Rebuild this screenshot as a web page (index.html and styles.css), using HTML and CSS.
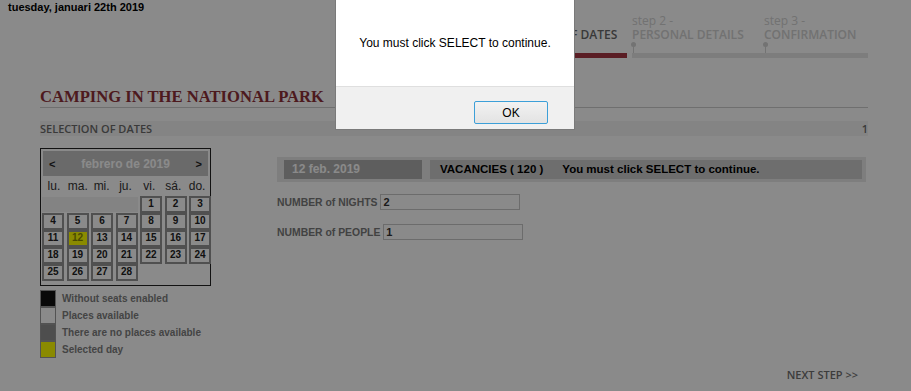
FILE: index.html
```html
<!DOCTYPE html>
<html lang="en">
<head>
  <meta charset="UTF-8">
  <meta name="viewport" content="width=device-width, initial-scale=1.0">
  <title>Camping in the National Park</title>
  <link rel="stylesheet" href="styles.css">
</head>
<body>
  <div class="today">tuesday, januari 22th 2019</div>

  <div class="page">
    <div class="steps">
      <div class="step active">
        <span class="step-num">step 1 -</span>
        <span class="step-name">SELECTION OF DATES</span>
        <div class="step-bar"></div>
      </div>
      <div class="step">
        <span class="step-num">step 2 -</span>
        <span class="step-name">PERSONAL DETAILS</span>
        <div class="step-bar"><i class="pin"></i></div>
      </div>
      <div class="step last">
        <span class="step-num">step 3 -</span>
        <span class="step-name">CONFIRMATION</span>
        <div class="step-bar"><i class="pin"></i></div>
      </div>
    </div>

    <h1 class="title">CAMPING IN THE NATIONAL PARK</h1>

    <div class="section-bar">
      <span>SELECTION OF DATES</span>
      <span>1</span>
    </div>

    <div class="booking">
      <div class="side">
        <div class="calendar">
          <div class="cal-head">
            <span>&lt;</span>
            <span class="cal-month">febrero de 2019</span>
            <span>&gt;</span>
          </div>
          <div class="cal-days">
            <span>lu.</span><span>ma.</span><span>mi.</span><span>ju.</span><span>vi.</span><span>sá.</span><span>do.</span>
          </div>
          <div class="cal-grid">
            <span class="blank span4"></span>
            <span class="day">1</span><span class="day">2</span><span class="day">3</span>
            <span class="day">4</span><span class="day">5</span><span class="day">6</span><span class="day">7</span><span class="day">8</span><span class="day">9</span><span class="day">10</span>
            <span class="day">11</span><span class="day sel">12</span><span class="day">13</span><span class="day">14</span><span class="day">15</span><span class="day">16</span><span class="day">17</span>
            <span class="day">18</span><span class="day">19</span><span class="day">20</span><span class="day">21</span><span class="day">22</span><span class="day">23</span><span class="day">24</span>
            <span class="day">25</span><span class="day">26</span><span class="day">27</span><span class="day">28</span>
          </div>
        </div>

        <ul class="legend">
          <li><i class="sw sw-black"></i>Without seats enabled</li>
          <li><i class="sw sw-white"></i>Places available</li>
          <li><i class="sw sw-grey"></i>There are no places available</li>
          <li><i class="sw sw-yellow"></i>Selected day</li>
        </ul>
      </div>

      <div class="main">
        <div class="info-row">
          <div class="chosen-date">12 feb. 2019</div>
          <div class="vacancies">
            <span>VACANCIES ( 120 )</span>
            <span>You must click SELECT to continue.</span>
          </div>
        </div>
        <label class="field">NUMBER of NIGHTS <input type="text" value="2"></label>
        <label class="field">NUMBER of PEOPLE <input type="text" value="1"></label>
      </div>
    </div>

    <div class="next"><a href="#">NEXT STEP &gt;&gt;</a></div>
  </div>

  <div class="overlay"></div>

  <div class="dialog">
    <div class="dialog-msg">You must click SELECT to continue.</div>
    <div class="dialog-foot">
      <button class="ok">OK</button>
    </div>
  </div>
</body>
</html>
```

FILE: styles.css
```css
body {
  margin: 0;
  background: #fff;
  font-family: "Liberation Sans", Arial, sans-serif;
  color: #000;
  height: 391px;
  overflow: hidden;
}

.today {
  padding: 1px 8px 0;
  font-size: 11px;
  font-weight: bold;
  height: 13px;
}

.page {
  margin-left: 40px;
  width: 828px;
}

/* steps */
.steps {
  display: flex;
  justify-content: flex-end;
  margin-top: 0;
  height: 45px;
}

.step {
  width: 132px;
  font-family: "Open Sans", sans-serif;
  font-size: 12px;
  font-weight: 600;
  color: #d2d2d2;
  line-height: 14px;
}

.step.active {
  color: #6a6a6a;
  margin-right: 5px;
}

.step.last {
  width: 104px;
}

.step-num,
.step-name {
  display: block;
  white-space: nowrap;
}

.step-num {
  font-weight: 400;
}

.step-bar {
  position: relative;
  height: 5px;
  margin-top: 11px;
  background: #e8e8e8;
}

.step.active .step-bar {
  background: #a73643;
}

.pin {
  position: absolute;
  left: 1px;
  top: -10px;
  width: 1px;
  height: 10px;
  background: #d4d4d4;
}

.pin::before {
  content: "";
  position: absolute;
  left: -2px;
  top: -1px;
  width: 5px;
  height: 5px;
  border-radius: 50%;
  background: #d4d4d4;
}

/* title */
.title {
  margin: 28px 0 0;
  font-family: "Liberation Serif", "Times New Roman", serif;
  font-size: 16.6px;
  font-weight: bold;
  color: #8f3038;
  line-height: 20px;
  padding-bottom: 0;
  border-bottom: 1px solid #cdcdcd;
}

.section-bar {
  display: flex;
  justify-content: space-between;
  margin-top: 13px;
  height: 15px;
  background: #f4f4f4;
  font-family: "Open Sans", sans-serif;
  font-size: 11px;
  font-weight: 600;
  color: #6c6c6c;
  line-height: 15px;
}

/* calendar + form */
.booking {
  display: flex;
  gap: 66px;
  margin-top: 12px;
}

.side {
  width: 171px;
  flex: none;
}

.calendar {
  border: 1px solid #222;
  padding: 2px 1px 5px;
}

.cal-head {
  display: flex;
  justify-content: space-between;
  align-items: center;
  height: 25px;
  margin: 0 1px;
  padding: 0 6px;
  background: #c4c4c4;
  font-size: 11px;
  font-weight: bold;
  color: #222;
}

.cal-month {
  color: #fff;
  font-size: 12px;
}

.cal-days {
  display: grid;
  grid-template-columns: repeat(7, 1fr);
  height: 20px;
  align-items: center;
  text-align: center;
  font-size: 12px;
  color: #333;
}

.cal-grid {
  display: grid;
  grid-template-columns: repeat(7, 22px);
  grid-auto-rows: 15px;
  gap: 2px 2.5px;
  margin-top: 1px;
}

.blank {
  background: #f2f2f2;
}

.span4 {
  grid-column: span 4;
}

.day {
  border: 2px solid #949494;
  background: #fff;
  font-size: 10px;
  font-weight: bold;
  color: #222;
  text-align: center;
  line-height: 12px;
  margin: -1px 0;
}

.day.sel {
  background: #ffff00;
  color: #8a8a00;
}

.legend {
  list-style: none;
  margin: 4px 0 0;
  padding: 0;
  font-size: 10px;
  font-weight: bold;
  color: #7e7e7e;
}

.legend li {
  display: flex;
  align-items: center;
  gap: 6px;
  height: 17px;
}

.sw {
  width: 14px;
  height: 15px;
  border: 1px solid #9a9a9a;
  flex: none;
}

.sw-black { background: #111; }
.sw-white { background: #fff; }
.sw-grey { background: #919191; }
.sw-yellow { background: #ffff00; }

.main {
  flex: 1;
  padding-right: 2px;
}

.info-row {
  display: flex;
  gap: 8px;
  margin-top: 9px;
  padding: 3px 4px 3px 7px;
  background: #e9e9e9;
}

.chosen-date {
  width: 130px;
  height: 19px;
  padding-left: 8px;
  background: #aeaeae;
  color: #fff;
  font-size: 12px;
  font-weight: bold;
  line-height: 19px;
}

.vacancies {
  flex: 1;
  display: flex;
  gap: 19px;
  height: 19px;
  padding-left: 10px;
  background: #cccccc;
  font-size: 11.5px;
  font-weight: bold;
  line-height: 19px;
}

.field {
  display: flex;
  align-items: center;
  gap: 3px;
  margin-top: 12px;
  font-size: 10.4px;
  font-weight: bold;
  color: #7a7a7a;
}

.field + .field {
  margin-top: 14px;
}

.field input {
  width: 134px;
  height: 14px;
  padding: 0 2px;
  margin: 0;
  border: 1px solid #c8c8c8;
  font: bold 11px "Liberation Sans", Arial, sans-serif;
  color: #333;
}

.next {
  text-align: right;
  margin-top: 7px;
  padding-right: 10px;
}

.next a {
  font-family: "Open Sans", sans-serif;
  font-size: 11px;
  font-weight: 600;
  color: #707070;
  text-decoration: none;
}

/* alert */
.overlay {
  position: fixed;
  inset: 0;
  background: rgba(0, 0, 0, 0.46);
}

.dialog {
  position: fixed;
  top: 0;
  left: 335px;
  width: 238px;
  border: 1px solid #7a7a7a;
  border-top: 0;
  background: #fff;
  font-family: "Liberation Sans", Arial, sans-serif;
}

.dialog-msg {
  height: 86px;
  font-size: 12px;
  text-align: center;
  line-height: 86px;
  color: #000;
}

.dialog-foot {
  display: flex;
  justify-content: flex-end;
  height: 43px;
  padding: 14px 26px 0 0;
  box-sizing: border-box;
  background: #f0f0f0;
  border-top: 1px solid #dfdfdf;
}

.ok {
  width: 74px;
  height: 23px;
  border: 1px solid #3c9fd8;
  border-radius: 2px;
  background: linear-gradient(#f2f2f2, #e3e3e3);
  font: 12px "Liberation Sans", Arial, sans-serif;
  color: #000;
  padding: 0;
}
```
